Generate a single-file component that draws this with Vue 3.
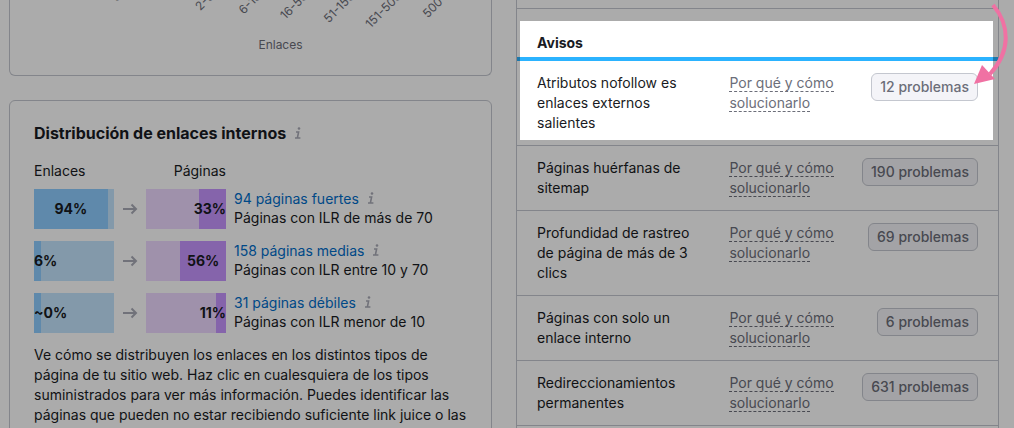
<script setup>
const ticks = [
  { label: '0', x: 112 },
  { label: '2-5', x: 205 },
  { label: '6-15', x: 252 },
  { label: '16-50', x: 299 },
  { label: '51-150', x: 346 },
  { label: '151-500', x: 393 },
  { label: '500+', x: 440 },
]

const groups = [
  { links: '94%', linkBar: 92, linkAlign: 'center', pages: '33%', pageBar: 34, pageAlign: 'end', title: '94 páginas fuertes', note: 'Páginas con ILR de más de 70' },
  { links: '6%', linkBar: 9, linkAlign: 'start', pages: '56%', pageBar: 57, pageAlign: 'center', title: '158 páginas medias', note: 'Páginas con ILR entre 10 y 70' },
  { links: '~0%', linkBar: 9, linkAlign: 'start', pages: '11%', pageBar: 12, pageAlign: 'end', title: '31 páginas débiles', note: 'Páginas con ILR menor de 10' },
]

const notices = [
  { name: 'Atributos nofollow es enlaces externos salientes', count: '12 problemas' },
  { name: 'Páginas huérfanas de sitemap', count: '190 problemas' },
  { name: 'Profundidad de rastreo de página de más de 3 clics', count: '69 problemas' },
  { name: 'Páginas con solo un enlace interno', count: '6 problemas' },
  { name: 'Redireccionamientos permanentes', count: '631 problemas' },
]
</script>

<template>
  <main class="page">
    <div class="column">
      <section class="card chart-card">
        <svg class="axis" viewBox="0 0 482 35" aria-hidden="true">
          <text
            v-for="t in ticks"
            :key="t.label"
            text-anchor="end"
            :transform="`translate(${t.x} -3) rotate(-45)`"
          >{{ t.label }}</text>
        </svg>
        <p class="axis-title">Enlaces</p>
      </section>

      <section class="card dist">
        <h2 class="dist-title">
          Distribución de enlaces internos
          <svg class="info" viewBox="0 0 8 12" aria-hidden="true">
            <circle cx="5" cy="1.5" r="1.3" />
            <path d="M2 5h2.6L3.4 10.8M1 11h5.4" />
          </svg>
        </h2>
        <div class="heads">
          <span>Enlaces</span>
          <span>Páginas</span>
        </div>
        <div v-for="g in groups" :key="g.title" class="group">
          <div class="bar blue">
            <div class="fill" :class="g.linkAlign" :style="{ width: g.linkBar + '%' }">{{ g.links }}</div>
          </div>
          <svg class="arrow" viewBox="0 0 16 16" aria-hidden="true">
            <path d="M1 8h13M9.5 3.5L14 8l-4.5 4.5" />
          </svg>
          <div class="bar purple">
            <div class="fill" :class="g.pageAlign" :style="{ width: g.pageBar + '%' }">{{ g.pages }}</div>
          </div>
          <div class="about">
            <div class="about-title">
              <a href="#">{{ g.title }}</a>
              <svg class="info" viewBox="0 0 8 12" aria-hidden="true">
                <circle cx="5" cy="1.5" r="1.3" />
                <path d="M2 5h2.6L3.4 10.8M1 11h5.4" />
              </svg>
            </div>
            <div>{{ g.note }}</div>
          </div>
        </div>
        <p class="text">
          Ve cómo se distribuyen los enlaces en los distintos tipos de página de tu sitio web. Haz clic en cualesquiera de los tipos suministrados para ver más información. Puedes identificar las páginas que pueden no estar recibiendo suficiente link juice o las
        </p>
      </section>
    </div>

    <section class="panel">
      <div class="previous"></div>
      <table class="notices">
        <colgroup>
          <col class="col-name">
          <col class="col-help">
          <col>
        </colgroup>
        <thead>
          <tr><th colspan="3" scope="colgroup">Avisos</th></tr>
        </thead>
        <tbody>
          <tr v-for="n in notices" :key="n.name">
            <td class="name">{{ n.name }}</td>
            <td class="help"><a href="#">Por qué y cómo solucionarlo</a></td>
            <td class="action"><button type="button">{{ n.count }}</button></td>
          </tr>
        </tbody>
      </table>
      <div class="spotlight"></div>
      <svg class="pointer" viewBox="0 0 44 90" aria-hidden="true">
        <path class="shaft" d="M23 5C40 25 41 51 20 74" />
        <path class="head" d="M4 84L12 65L25 79Z" />
      </svg>
    </section>
  </main>
</template>

<style>
body {
  background: #fff;
}
</style>

<style scoped>
.page {
  box-sizing: border-box;
  display: grid;
  grid-template-columns: 1fr 1fr;
  gap: 24px;
  height: 100vh;
  padding: 0 15px 0 9px;
  overflow: hidden;
  position: relative;
  font: 14px/20px Inter, sans-serif;
  color: #191b23;
}

.column {
  display: flex;
  flex-direction: column;
  gap: 24px;
}

.card {
  border: 1px solid #c4c7cf;
  border-radius: 6px;
}

.chart-card {
  border-top: 0;
  border-radius: 0 0 6px 6px;
  padding-bottom: 20px;
}

.axis {
  display: block;
  width: 100%;
  font-size: 12px;
  fill: #6c6e79;
}

.axis-title {
  margin: 0;
  padding-left: 60px;
  text-align: center;
  font-size: 12px;
  color: #6c6e79;
}

.dist {
  flex: 1;
  padding: 20px 24px;
}

.dist-title {
  display: flex;
  align-items: center;
  gap: 8px;
  margin: 0 0 16px;
  font-size: 16px;
  line-height: 24px;
  font-weight: 700;
}

.info {
  width: 8px;
  height: 12px;
  fill: #a9abb6;
}

.info path {
  fill: none;
  stroke: #a9abb6;
  stroke-width: 1.6;
}

.heads {
  display: flex;
  width: 192px;
  justify-content: space-between;
  margin-bottom: 8px;
}

.group {
  display: flex;
  align-items: flex-start;
  height: 40px;
  margin-bottom: 12px;
}

.bar {
  display: flex;
  flex: none;
  width: 80px;
  height: 40px;
}

.blue {
  background: #c4e5fe;
}

.purple {
  justify-content: flex-end;
  background: #edd9ff;
}

.fill {
  display: flex;
  align-items: center;
  font-weight: 700;
}

.blue .fill {
  background: #8ecdff;
}

.purple .fill {
  background: #c695ff;
}

.center {
  justify-content: center;
}

.start {
  justify-content: flex-start;
}

.end {
  justify-content: flex-end;
}

.arrow {
  flex: none;
  width: 16px;
  height: 16px;
  margin: 12px 8px;
  fill: none;
  stroke: #a9abb6;
  stroke-width: 2;
}

.about {
  margin-left: 8px;
  line-height: 19px;
}

.about-title {
  display: flex;
  align-items: center;
  gap: 8px;
}

.about a {
  color: #006dca;
  text-decoration: none;
}

.text {
  margin: 0;
}

.panel {
  position: relative;
  border: solid #c4c7cf;
  border-width: 0 1px;
}

.previous {
  height: 8px;
  border-bottom: 1px solid #c4c7cf;
}

.notices {
  width: 100%;
  table-layout: fixed;
  border-spacing: 0;
}

.col-name {
  width: 40%;
}

.col-help {
  width: 30%;
}

th {
  padding: 24px 20px 4px;
  border-bottom: 4px solid #2bb3ff;
  text-align: left;
  font-weight: 700;
}

td {
  padding: 12px 0;
  border-bottom: 1px solid #c4c7cf;
  vertical-align: top;
}

.name {
  padding-left: 20px;
  padding-right: 12px;
}

.help {
  padding-left: 20px;
  padding-right: 12px;
}

.help a {
  color: #6c6e79;
  text-decoration: none;
  border-bottom: 1px dashed #6c6e79;
}

.action {
  padding-right: 20px;
  text-align: right;
}

button {
  display: inline-block;
  height: 28px;
  padding: 0 8px;
  border: 1px solid #c4c7cf;
  border-radius: 6px;
  background: #f4f4f8;
  color: #6c6e79;
  font: 500 14px/20px Inter, sans-serif;
  vertical-align: top;
}

.spotlight {
  position: absolute;
  top: 21px;
  left: 3px;
  right: 5px;
  height: 119px;
  box-shadow: 0 0 0 4000px rgba(0, 0, 0, 0.33);
  pointer-events: none;
}

.pointer {
  position: absolute;
  top: 0;
  right: -16px;
  width: 44px;
  height: 90px;
  pointer-events: none;
}

.shaft {
  fill: none;
  stroke: #f071a3;
  stroke-width: 4;
}

.head {
  fill: #f071a3;
}
</style>
